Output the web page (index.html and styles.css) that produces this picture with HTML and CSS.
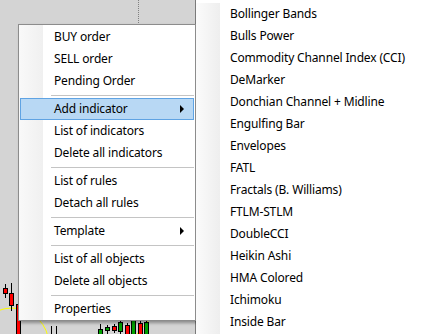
FILE: index.html
```html
<!DOCTYPE html>
<html>
<head>
<meta charset="utf-8">
<link rel="stylesheet" href="styles.css">
</head>
<body>
<div class="screen">
  <svg class="chart" width="196" height="334" viewBox="0 0 196 334">
    <rect x="0" y="0" width="195" height="334" fill="#d4d4d4"/>
    <line x1="195.5" y1="0" x2="195.5" y2="334" stroke="#7a7a7a"/>
    <line x1="138.5" y1="0" x2="138.5" y2="24" stroke="#808080" stroke-dasharray="1 1"/>
    <circle cx="12" cy="345" r="37" fill="none" stroke="#ffff00" stroke-width="1"/>
    <line x1="137" y1="334" x2="149" y2="320" stroke="#ffff00"/>
    <g stroke="#000" stroke-width="1" shape-rendering="crispEdges">
      <line x1="5.5" y1="284" x2="5.5" y2="298"/>
      <rect x="3.5" y="288.5" width="4" height="5" fill="#ff0000"/>
      <line x1="11.5" y1="283" x2="11.5" y2="311"/>
      <rect x="9.5" y="293.5" width="4" height="12" fill="#ff0000"/>
      <line x1="18.5" y1="300" x2="18.5" y2="334"/>
      <rect x="16.5" y="304.5" width="4" height="30" fill="#ff0000"/>
      <line x1="51.5" y1="326" x2="51.5" y2="334"/>
      <line x1="56.5" y1="326" x2="56.5" y2="334"/>
      <line x1="100.5" y1="324" x2="100.5" y2="334"/>
      <rect x="98.5" y="329.5" width="4" height="5" fill="#00a000"/>
      <line x1="107.5" y1="325" x2="107.5" y2="334"/>
      <rect x="105.5" y="327.5" width="4" height="3" fill="#00a000"/>
      <line x1="114.5" y1="324" x2="114.5" y2="333"/>
      <rect x="112.5" y="326.5" width="4" height="4" fill="#ff0000"/>
      <line x1="120.5" y1="320" x2="120.5" y2="334"/>
      <rect x="118.5" y="322.5" width="4" height="9" fill="#00a000"/>
      <line x1="127.5" y1="323" x2="127.5" y2="334"/>
      <rect x="125.5" y="325.5" width="4" height="9" fill="#ff0000"/>
      <line x1="133.5" y1="318" x2="133.5" y2="334"/>
      <rect x="131.5" y="320.5" width="4" height="14" fill="#00a000"/>
      <line x1="140.5" y1="321" x2="140.5" y2="334"/>
      <rect x="138.5" y="323.5" width="4" height="11" fill="#ff0000"/>
      <line x1="146.5" y1="320" x2="146.5" y2="334"/>
      <rect x="144.5" y="322.5" width="4" height="12" fill="#00a000"/>
    </g>
  </svg>

  <div class="menu main-menu">
    <div class="item">BUY order</div>
    <div class="item">SELL order</div>
    <div class="item">Pending Order</div>
    <div class="sep"></div>
    <div class="item active sub">Add indicator</div>
    <div class="item">List of indicators</div>
    <div class="item">Delete all indicators</div>
    <div class="sep"></div>
    <div class="item">List of rules</div>
    <div class="item">Detach all rules</div>
    <div class="sep"></div>
    <div class="item sub">Template</div>
    <div class="sep"></div>
    <div class="item">List of all objects</div>
    <div class="item">Delete all objects</div>
    <div class="sep"></div>
    <div class="item">Properties</div>
  </div>

  <div class="menu sub-menu">
    <div class="item">Bollinger Bands</div>
    <div class="item">Bulls Power</div>
    <div class="item">Commodity Channel Index (CCI)</div>
    <div class="item">DeMarker</div>
    <div class="item">Donchian Channel + Midline</div>
    <div class="item">Engulfing Bar</div>
    <div class="item">Envelopes</div>
    <div class="item">FATL</div>
    <div class="item">Fractals (B. Williams)</div>
    <div class="item">FTLM-STLM</div>
    <div class="item">DoubleCCI</div>
    <div class="item">Heikin Ashi</div>
    <div class="item">HMA Colored</div>
    <div class="item">Ichimoku</div>
    <div class="item">Inside Bar</div>
  </div>
</div>
</body>
</html>
```

FILE: styles.css
```css
html, body {
  margin: 0;
  padding: 0;
  background: #ffffff;
}

.screen {
  position: relative;
  width: 434px;
  height: 334px;
  overflow: hidden;
  font-family: "Noto Sans", "Open Sans", sans-serif;
  font-size: 12px;
  letter-spacing: -0.15px;
  color: #000;
}

.chart {
  position: absolute;
  left: 0;
  top: 0;
  display: block;
}

.menu {
  position: absolute;
  box-sizing: border-box;
}

.main-menu {
  left: 18px;
  top: 24px;
  width: 178px;
  height: 297px;
  border: 1px solid #8c8c8c;
  padding: 1px 1px 0 1px;
  background: linear-gradient(to right, #f9f9f9 0, #f0f0f0 24px, #ffffff 24px);
  box-shadow: 2px 2px 3px rgba(0, 0, 0, 0.35);
}

.sub-menu {
  left: 196px;
  top: 3px;
  right: 0;
  bottom: 0;
  background: linear-gradient(to right, #fbfbfb 0, #eeeeee 24px, #ffffff 24px);
}

.item {
  position: relative;
  height: 22px;
  line-height: 22px;
  padding-left: 34px;
  white-space: nowrap;
  box-sizing: border-box;
}

.item.active {
  background: #b8d8f4;
  border: 1px solid #5fa3e3;
  line-height: 20px;
  padding-left: 33px;
}

.item.sub::after {
  content: "";
  position: absolute;
  right: 10px;
  top: 7px;
  border-left: 4px solid #000;
  border-top: 4px solid transparent;
  border-bottom: 4px solid transparent;
}

.item.active.sub::after {
  top: 6px;
  right: 9px;
}

.sep {
  height: 1px;
  margin: 3px 0 2px 31px;
  background: #c4c4c4;
}
```
